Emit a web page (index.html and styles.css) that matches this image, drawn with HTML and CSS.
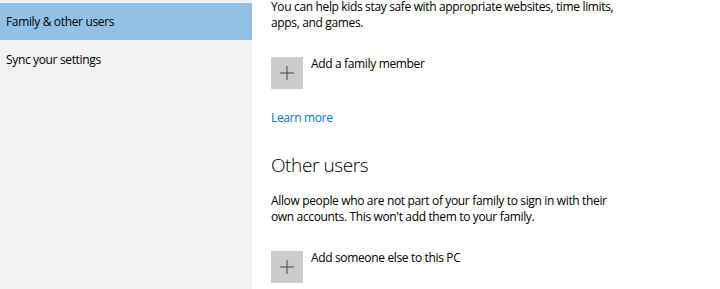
FILE: index.html
```html
<!DOCTYPE html>
<html lang="en">
<head>
    <meta charset="UTF-8">
    <title>Family &amp; other users</title>
    <link rel="stylesheet" href="styles.css">
</head>
<body>
    <div class="sidebar">
        <div class="nav-item selected">Family &amp; other users</div>
        <div class="nav-item">Sync your settings</div>
    </div>

    <div class="content">
        <p class="desc">You can help kids stay safe with appropriate websites, time limits,<br>apps, and games.</p>

        <div class="add-row">
            <div class="plus-box">
                <svg width="14" height="14" viewBox="0 0 14 14"><path d="M7 0V14M0 7H14" stroke="#444" stroke-width="1"/></svg>
            </div>
            <span>Add a family member</span>
        </div>

        <a class="link" href="#">Learn more</a>

        <h2>Other users</h2>

        <p class="desc">Allow people who are not part of your family to sign in with their<br>own accounts. This won't add them to your family.</p>

        <div class="add-row">
            <div class="plus-box">
                <svg width="14" height="14" viewBox="0 0 14 14"><path d="M7 0V14M0 7H14" stroke="#444" stroke-width="1"/></svg>
            </div>
            <span>Add someone else to this PC</span>
        </div>
    </div>
</body>
</html>
```

FILE: styles.css
```css
body {
    margin: 0;
    font-family: "Open Sans", "Noto Sans", sans-serif;
    font-size: 12px;
    letter-spacing: -0.35px;
    color: #000;
    background: #fff;
    display: flex;
    height: 289px;
    overflow: hidden;
}
.sidebar {
    width: 252px;
    flex-shrink: 0;
    background: #f2f2f2;
    padding-top: 3px;
}
.nav-item {
    height: 40px;
    line-height: 40px;
    padding-left: 6px;
}
.nav-item.selected {
    background: #91c1e7;
    height: 37px;
    line-height: 38px;
}
.content {
    padding-left: 19px;
    margin-top: -1px;
}
.desc {
    margin: 0;
    line-height: 16px;
}
.add-row {
    display: flex;
    align-items: flex-start;
    margin-top: 26px;
}
.add-row span {
    margin-left: 8px;
    margin-top: -1px;
    line-height: 16px;
}
.plus-box {
    width: 32px;
    height: 32px;
    background: #cccccc;
    display: flex;
    align-items: center;
    justify-content: center;
}
.link {
    display: block;
    margin-top: 21px;
    color: #0078d7;
    text-decoration: none;
    line-height: 16px;
}
h2 {
    font-weight: 300;
    font-size: 19px;
    letter-spacing: -0.4px;
    margin: 26px 0 15px;
    line-height: 26px;
}
```
